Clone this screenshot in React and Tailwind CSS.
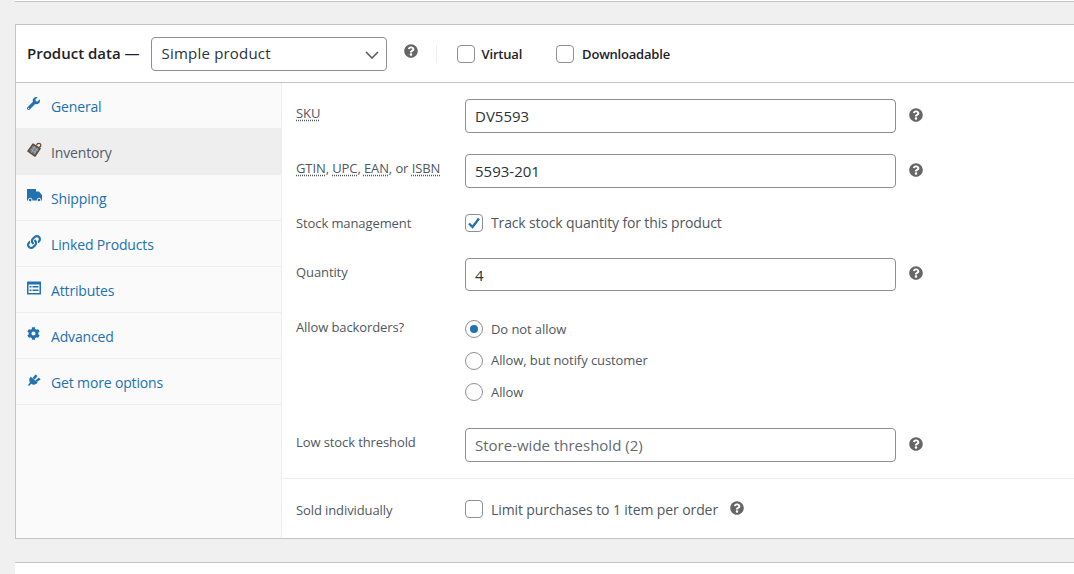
import { FaWrench, FaLink, FaCog, FaQuestionCircle } from 'react-icons/fa';

const font = 'font-["Open_Sans","Noto_Sans",sans-serif]';

function HelpTip() {
  return <FaQuestionCircle size={14} className="text-[#666] shrink-0" />;
}

function TagIcon() {
  return (
    <svg width="15" height="15" viewBox="0 0 15 15" className="shrink-0">
      <path d="M6 2.2 13 6.6 8 14 1 9.2Z" fill="#6f7a88" stroke="#5f4c40" strokeWidth="1.6" strokeLinejoin="round" />
      <path d="M3.6 7 9 10.6M5.2 4.8 10.8 8.4M4.4 10.6 8 4.2M7 12.2 10.6 6" stroke="#b9b6b2" strokeWidth="0.7" fill="none" />
      <path d="M9.6 3.6C9.6 0.8 13.8 0.4 13.8 3.2 13.8 4.6 12.8 5.2 11.8 5.2" stroke="#5f4c40" strokeWidth="1.2" fill="none" />
    </svg>
  );
}

function TruckIcon() {
  return (
    <svg width="15" height="13" viewBox="0 0 15 13" className="shrink-0">
      <path d="M0 0h9v2.5h3L15 6v5.5H0Z" fill="#2271b1" />
      <circle cx="3.2" cy="11" r="1.8" fill="#2271b1" stroke="#fafafa" strokeWidth="0.9" />
      <circle cx="12" cy="11" r="1.8" fill="#2271b1" stroke="#fafafa" strokeWidth="0.9" />
    </svg>
  );
}

function ListIcon() {
  return (
    <svg width="14" height="14" viewBox="0 0 14 14" className="shrink-0">
      <rect width="14" height="13" y="0.5" rx="0.5" fill="#2271b1" />
      <rect x="1.5" y="3.5" width="11" height="8.5" fill="#fafafa" />
      <path d="M2.5 5h2v1.5h-2zM5.5 5h6v1.5h-6zM2.5 8.5h2V10h-2zM5.5 8.5h6V10h-6z" fill="#2271b1" />
    </svg>
  );
}

function PlugIcon() {
  return (
    <svg width="13" height="12" viewBox="0 0 13 12" className="shrink-0 ml-px">
      <path d="M2.8 2.8 9.6 8.6C8 11 5 11.2 3.3 9.8L1 12 0 11l2-2.4C0.8 6.8 1 4.4 2.8 2.8Z" fill="#2271b1" />
      <path d="M4.6 4 7.4 0.4 9.6 2 6.6 5.4ZM7.4 6.6 11 3.6l1.6 2L8.8 8Z" fill="#2271b1" />
    </svg>
  );
}

const tabs = [
  { label: 'General', icon: <FaWrench size={13} className="text-[#2271b1]" /> },
  { label: 'Inventory', icon: <TagIcon />, active: true },
  { label: 'Shipping', icon: <TruckIcon /> },
  { label: 'Linked Products', icon: <FaLink size={14} className="text-[#2271b1]" /> },
  { label: 'Attributes', icon: <ListIcon /> },
  { label: 'Advanced', icon: <FaCog size={13} className="text-[#2271b1]" /> },
  { label: 'Get more options', icon: <PlugIcon /> },
];

function Checkbox({ checked }) {
  return (
    <span className="relative flex h-[18px] w-[18px] shrink-0 items-center justify-center rounded-[4px] border border-[#8c8f94] bg-white">
      {checked && (
        <svg width="14" height="14" viewBox="0 0 14 14">
          <path d="M2 7.5 5.5 11 12 2.5" stroke="#2271b1" strokeWidth="2.4" fill="none" />
        </svg>
      )}
    </span>
  );
}

function Radio({ checked, label }) {
  return (
    <div className="flex h-[18px] items-center gap-2">
      <span className="flex h-[18px] w-[18px] shrink-0 items-center justify-center rounded-full border border-[#8c8f94] bg-white">
        {checked && <span className="h-2 w-2 rounded-full bg-[#2271b1]" />}
      </span>
      <span className="pt-px text-[13px] tracking-[-0.08px] text-[#50575e]">{label}</span>
    </div>
  );
}

function Field({ label, value, placeholder, inputHeight = 'h-[34px]', helpTop = 'mt-[9px]' }) {
  return (
    <div className="flex items-start">
      <div className="w-[169px] shrink-0 pt-[5px] text-[13px] leading-[18px] tracking-[-0.1px] text-[#50575e]">{label}</div>
      <input
        readOnly
        value={value}
        placeholder={placeholder}
        className={`${inputHeight} w-[431px] rounded-[4px] border border-[#8c8f94] bg-white px-[9px] text-[15px] text-[#2c3338] outline-none placeholder:text-[#646970]`}
      />
      <span className={`ml-[13px] ${helpTop}`}><HelpTip /></span>
    </div>
  );
}

function Abbr({ children }) {
  return <abbr className="underline decoration-dotted underline-offset-2">{children}</abbr>;
}

export default function App() {
  return (
    <div className={`h-[574px] w-[1074px] overflow-hidden bg-[#f0f0f1] ${font}`}>
      <div className="ml-[15px] h-[2px] w-[1100px] border-b border-[#c3c4c7] bg-white" />

      <div className="ml-[15px] mt-[22px] w-[1100px] border border-[#c3c4c7] bg-white">
        {/* Header */}
        <div className="flex h-[58px] items-center border-b border-[#c3c4c7] pl-[11px]">
          <span className="text-[15px] font-semibold text-[#1d2327]">Product data —</span>
          <div className="relative ml-[11px]">
            <select className="h-[34px] w-[236px] appearance-none rounded-[4px] border border-[#8c8f94] bg-white pl-[10px] text-[15px] font-medium tracking-[0.2px] text-[#2c3338] outline-none">
              <option>Simple product</option>
            </select>
            <svg width="14" height="8" viewBox="0 0 14 8" className="pointer-events-none absolute right-[8px] top-[14px]">
              <path d="M1 1 7 7 13 1" stroke="#50575e" strokeWidth="1.5" fill="none" />
            </svg>
          </div>
          <span className="ml-[17px] -mt-[5px]"><HelpTip /></span>
          <span className="ml-[18px] h-[18px] w-px bg-[#eee]" />
          <span className="ml-[20px]"><Checkbox /></span>
          <span className="ml-[7px] mt-[3px] text-[13px] font-semibold tracking-[-0.2px] text-[#1d2327]">Virtual</span>
          <span className="ml-[34px]"><Checkbox /></span>
          <span className="ml-[8px] mt-[3px] text-[13px] font-semibold tracking-[-0.2px] text-[#1d2327]">Downloadable</span>
        </div>

        <div className="flex">
          {/* Sidebar tabs */}
          <div className="w-[266px] shrink-0 border-r border-[#eee] bg-[#fafafa]">
            {tabs.map((tab) => (
              <div
                key={tab.label}
                className={`flex h-[46px] items-center border-b border-[#eee] pl-[11px] ${tab.active ? 'bg-[#eee] text-[#555d66]' : 'text-[#2271b1]'}`}
              >
                <span className="flex w-[24px] justify-start -mt-[4px]">{tab.icon}</span>
                <span className="pt-[2px] text-[14px] tracking-[-0.15px]">{tab.label}</span>
              </div>
            ))}
          </div>

          {/* Inventory panel */}
          <div className="flex-1">
            <div className="flex flex-col border-b border-[#eee] pb-4 pl-[14px] pt-4">
              <Field label={<Abbr>SKU</Abbr>} value="DV5593" />
              <div className="mt-[21px]">
                <Field
                  label={<><Abbr>GTIN</Abbr>, <Abbr>UPC</Abbr>, <Abbr>EAN</Abbr>, or <Abbr>ISBN</Abbr></>}
                  value="5593-201"
                />
              </div>
              <div className="mt-[26px] flex h-[18px] items-center">
                <div className="w-[169px] shrink-0 pt-[2px] text-[13px] tracking-[-0.1px] text-[#50575e]">Stock management</div>
                <Checkbox checked />
                <span className="ml-2 -mt-[2px] text-[14px] tracking-[-0.14px] text-[#50575e]">Track stock quantity for this product</span>
              </div>
              <div className="mt-[26px]">
                <Field label="Quantity" value="4" inputHeight="h-[33px]" helpTop="mt-[8px]" />
              </div>
              <div className="mt-[29px] flex items-start">
                <div className="-mt-[2px] w-[169px] shrink-0 text-[13px] leading-[18px] tracking-[-0.1px] text-[#50575e]">Allow backorders?</div>
                <div className="flex flex-col gap-[13.5px]">
                  <Radio checked label="Do not allow" />
                  <Radio label="Allow, but notify customer" />
                  <Radio label="Allow" />
                </div>
              </div>
              <div className="mt-[27px]">
                <Field label="Low stock threshold" placeholder="Store-wide threshold (2)" />
              </div>
            </div>
            <div className="flex h-[59px] items-center pl-[14px] pt-px">
              <div className="w-[169px] shrink-0 pt-[3px] text-[13px] tracking-[-0.1px] text-[#50575e]">Sold individually</div>
              <Checkbox />
              <span className="ml-2 text-[14px] tracking-[-0.1px] text-[#50575e]">Limit purchases to 1 item per order</span>
              <span className="ml-3 -mt-[3px]"><HelpTip /></span>
            </div>
          </div>
        </div>
      </div>

      <div className="ml-[15px] mt-[23px] h-[20px] w-[1100px] border-t border-[#c3c4c7] bg-white" />
    </div>
  );
}
